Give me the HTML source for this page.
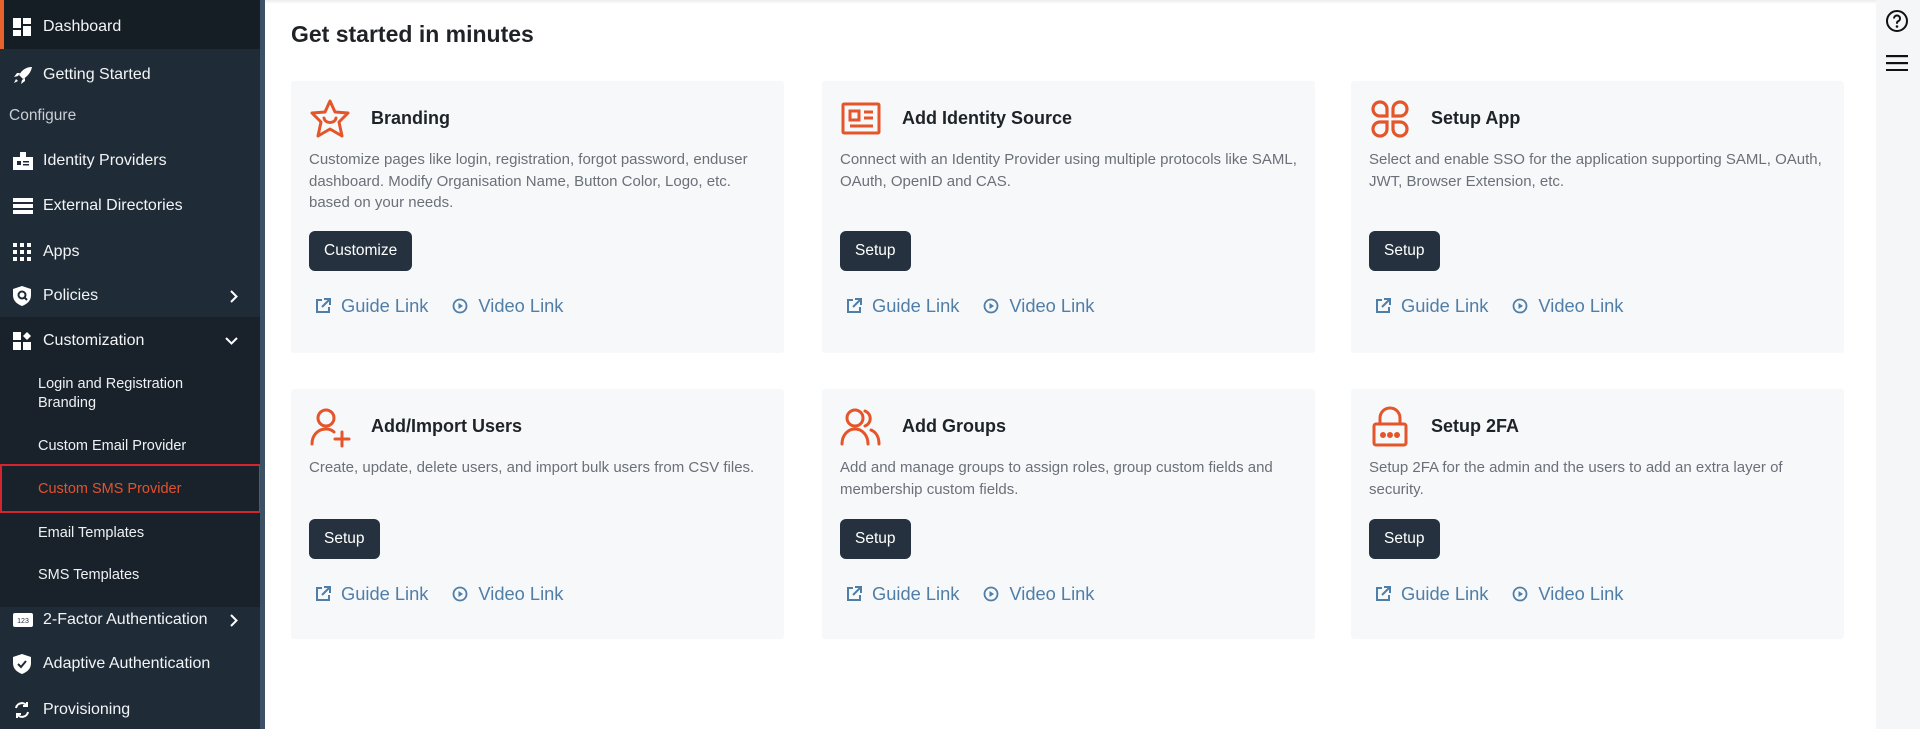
<!DOCTYPE html>
<html><head><meta charset="utf-8"><style>
*{box-sizing:border-box;margin:0;padding:0}
body{width:1920px;height:729px;overflow:hidden;background:#fff;font-family:"Liberation Sans",sans-serif;position:relative}
#sb{position:absolute;left:0;top:0;width:260px;height:729px;background:#1f2b36;color:#fff}
#sbb{position:absolute;left:260px;top:0;width:5px;height:729px;background:#3d5166}
.it{position:absolute;left:0;width:260px;height:44px;display:flex;align-items:center;font-size:16px;color:#f2f4f6}
.it svg{position:absolute;left:13px}
.it span{position:absolute;left:43px}
.it svg.chev{left:auto;right:22px}
.sub{position:absolute;left:38px;font-size:14.5px;color:#eef1f3;line-height:19px}
#rp{position:absolute;left:1876px;top:0;width:44px;height:729px;background:#f5f6f7}
h1{position:absolute;left:291px;top:21px;font-size:23px;font-weight:bold;color:#1f2328}
.card{position:absolute;width:493px;background:#f7f8fa;border-radius:3px}
.card .ic{position:absolute;left:18px;top:17px}
.card h2{position:absolute;left:80px;top:27px;font-size:18px;font-weight:bold;color:#1e2328}
.card p{position:absolute;left:18px;top:68px;width:462px;font-size:15px;line-height:21.5px;color:#6b7078}
.btn{position:absolute;left:18px;height:40px;padding:0 15px;background:#25313e;color:#fff;border-radius:6px;font-size:15.5px;line-height:40px}
.lk{position:absolute;left:24px;font-size:18.3px;color:#4f7ea8;display:flex;align-items:center}
.lk svg{margin-right:10px}
</style></head><body>
<div id="sb">
 <div style="position:absolute;top:0;left:0;width:260px;height:49px;background:#151d25;border-left:4px solid #e8622c"></div>
 <div class="it" style="top:5px">
  <svg width="18" height="18" viewBox="0 0 18 18" style="left:13px" fill="#fff"><rect x="0" y="0" width="8" height="10"/><rect x="10" y="0" width="8" height="6"/><rect x="0" y="12" width="8" height="6"/><rect x="10" y="8" width="8" height="10"/></svg><span>Dashboard</span></div>
 <div class="it" style="top:53px"><svg width="20" height="18" viewBox="0 0 20 18" fill="#fff"><path d="M19 1C13 1 9 4 6 9l4 4c5-3 8-7 9-12zM5 10l-4 1 3-4 3 0zM9 14l-1 4 4-3 0-3zM3 13l-2 4 4-2z"/></svg><span>Getting Started</span></div>
 <div style="position:absolute;left:9px;top:107px;font-size:15.5px;color:#c9cfd5">Configure</div>
 <div class="it" style="top:139px"><svg width="20" height="18" viewBox="0 0 20 18" fill="#fff"><path d="M7 0h6v5h7v13H0V5h7z"/><rect x="4" y="9" width="4" height="4" fill="#1f2b36"/><rect x="10" y="9" width="6" height="1.5" fill="#1f2b36"/><rect x="10" y="12" width="6" height="1.5" fill="#1f2b36"/></svg><span>Identity Providers</span></div>
 <div class="it" style="top:184px"><svg width="20" height="16" viewBox="0 0 20 16" fill="#fff"><rect y="0" width="20" height="4"/><rect y="6" width="20" height="4"/><rect y="12" width="20" height="4"/></svg><span>External Directories</span></div>
 <div class="it" style="top:230px"><svg width="18" height="18" viewBox="0 0 18 18" fill="#fff"><rect x="0" y="0" width="4" height="4"/><rect x="7" y="0" width="4" height="4"/><rect x="14" y="0" width="4" height="4"/><rect x="0" y="7" width="4" height="4"/><rect x="7" y="7" width="4" height="4"/><rect x="14" y="7" width="4" height="4"/><rect x="0" y="14" width="4" height="4"/><rect x="7" y="14" width="4" height="4"/><rect x="14" y="14" width="4" height="4"/></svg><span>Apps</span></div>
 <div class="it" style="top:274px"><svg width="18" height="20" viewBox="0 0 18 20"><path d="M9 0l9 3v6c0 6-4 9-9 11C4 18 0 15 0 9V3z" fill="#fff"/><circle cx="9" cy="9" r="3.5" fill="none" stroke="#1f2b36" stroke-width="2"/><path d="M11 11l3 3" stroke="#1f2b36" stroke-width="2"/></svg><span>Policies</span><svg class="chev" width="8" height="13" viewBox="0 0 8 13" fill="none" stroke="#fff" stroke-width="2"><path d="M1 1l5.5 5.5L1 12"/></svg></div>
 <div style="position:absolute;top:317px;left:0;width:260px;height:290px;background:#19222b"></div>
 <div class="it" style="top:319px"><svg width="18" height="18" viewBox="0 0 18 18" fill="#fff"><rect x="0" y="0" width="8" height="8"/><rect x="0" y="10" width="8" height="8"/><rect x="10" y="10" width="8" height="8"/><path d="M14 0l4 4-4 4-4-4z"/></svg><span>Customization</span><svg class="chev" width="13" height="8" viewBox="0 0 13 8" fill="none" stroke="#fff" stroke-width="2"><path d="M1 1l5.5 5.5L12 1"/></svg></div>
 <div class="sub" style="top:375px">Login and Registration<br>Branding</div>
 <div class="sub" style="top:437px">Custom Email Provider</div>
 <div style="position:absolute;left:0;top:464px;width:261px;height:49px;border:2px solid #d32530"></div>
 <div class="sub" style="top:480px;color:#e2522f">Custom SMS Provider</div>
 <div class="sub" style="top:524px">Email Templates</div>
 <div class="sub" style="top:566px">SMS Templates</div>
 <div class="it" style="top:598px"><svg width="20" height="14" viewBox="0 0 20 14"><rect width="20" height="14" rx="2" fill="#fff"/><text x="10" y="10" font-size="7" text-anchor="middle" fill="#1f2b36" font-family="Liberation Sans">123</text></svg><span>2-Factor Authentication</span><svg class="chev" width="8" height="13" viewBox="0 0 8 13" fill="none" stroke="#fff" stroke-width="2"><path d="M1 1l5.5 5.5L1 12"/></svg></div>
 <div class="it" style="top:642px"><svg width="18" height="20" viewBox="0 0 18 20"><path d="M9 0l9 3v6c0 6-4 9-9 11C4 18 0 15 0 9V3z" fill="#fff"/><path d="M5 10l3 3 5-6" stroke="#1f2b36" stroke-width="2" fill="none"/></svg><span>Adaptive Authentication</span></div>
 <div class="it" style="top:688px"><svg width="18" height="18" viewBox="0 0 18 18" fill="none" stroke="#fff" stroke-width="2"><path d="M3 7a6 6 0 0 1 11-2M15 11a6 6 0 0 1-11 2"/><path d="M14 1v4h-4M4 17v-4h4"/></svg><span>Provisioning</span></div>
</div>
<div id="sbb"></div>
<div style="position:absolute;left:265px;top:0;width:1611px;height:4px;background:linear-gradient(#ececec,#fff)"></div>
<div id="rp">
 <svg width="24" height="24" viewBox="0 0 24 24" style="position:absolute;left:9px;top:9px"><circle cx="12" cy="12" r="10" fill="none" stroke="#111" stroke-width="2"/><path d="M9 9.5a3 3 0 1 1 4 2.8c-.8.4-1 1-1 2v.5" fill="none" stroke="#111" stroke-width="2"/><circle cx="12" cy="17.5" r="1.3" fill="#111"/></svg>
 <svg width="22" height="16" viewBox="0 0 22 16" style="position:absolute;left:10px;top:55px" fill="#111"><rect y="0" width="22" height="2.2"/><rect y="7" width="22" height="2.2"/><rect y="14" width="22" height="2.2"/></svg>
</div>
<h1>Get started in minutes</h1>

<div class="card" style="left:291px;top:81px;height:272px">
 <svg class="ic" width="42" height="42" viewBox="0 0 42 42" fill="none" stroke="#e4552a" stroke-width="3" stroke-linejoin="round"><path d="M21 3l5 11 13 1-9 9 3 14-12-7-12 7 3-14-9-9 13-1z"/><path d="M15 20c1 6 11 6 12 0" stroke-linecap="round"/></svg>
 <h2>Branding</h2>
 <p>Customize pages like login, registration, forgot password, enduser dashboard. Modify Organisation Name, Button Color, Logo, etc. based on your needs.</p>
 <div class="btn" style="top:150px">Customize</div>
 <div class="lk" style="top:214px"><svg width="16" height="16" viewBox="0 0 16 16" fill="none" stroke="#4f7ea8" stroke-width="2"><path d="M7 2H2v12h12V9M9 1h6v6M15 1L7 9"/></svg>Guide Link<span style="display:inline-block;width:24px"></span><svg width="16" height="16" viewBox="0 0 16 16"><circle cx="8" cy="8" r="6.5" fill="none" stroke="#4f7ea8" stroke-width="1.8"/><path d="M6.5 5v6l4.5-3z" fill="#4f7ea8"/></svg>Video Link</div>
</div>

<div class="card" style="left:822px;top:81px;height:272px">
 <svg class="ic" width="42" height="42" viewBox="0 0 42 42" fill="none" stroke="#e4552a" stroke-width="3"><rect x="3" y="6" width="36" height="29" rx="1"/><rect x="10" y="13" width="9" height="9"/><path d="M24 14h9M24 20h9M10 28h23"/></svg>
 <h2>Add Identity Source</h2>
 <p>Connect with an Identity Provider using multiple protocols like SAML, OAuth, OpenID and CAS.</p>
 <div class="btn" style="top:150px">Setup</div>
 <div class="lk" style="top:214px"><svg width="16" height="16" viewBox="0 0 16 16" fill="none" stroke="#4f7ea8" stroke-width="2"><path d="M7 2H2v12h12V9M9 1h6v6M15 1L7 9"/></svg>Guide Link<span style="display:inline-block;width:24px"></span><svg width="16" height="16" viewBox="0 0 16 16"><circle cx="8" cy="8" r="6.5" fill="none" stroke="#4f7ea8" stroke-width="1.8"/><path d="M6.5 5v6l4.5-3z" fill="#4f7ea8"/></svg>Video Link</div>
</div>

<div class="card" style="left:1351px;top:81px;height:272px">
 <svg class="ic" width="42" height="42" viewBox="0 0 42 42" fill="none" stroke="#e4552a" stroke-width="3.2"><path d="M18 18H11a7 7 0 1 1 7-7zM24 18h7a7 7 0 1 0-7-7zM18 24H11a7 7 0 1 0 7 7zM24 24h7a7 7 0 1 1-7 7z"/></svg>
 <h2>Setup App</h2>
 <p>Select and enable SSO for the application supporting SAML, OAuth, JWT, Browser Extension, etc.</p>
 <div class="btn" style="top:150px">Setup</div>
 <div class="lk" style="top:214px"><svg width="16" height="16" viewBox="0 0 16 16" fill="none" stroke="#4f7ea8" stroke-width="2"><path d="M7 2H2v12h12V9M9 1h6v6M15 1L7 9"/></svg>Guide Link<span style="display:inline-block;width:24px"></span><svg width="16" height="16" viewBox="0 0 16 16"><circle cx="8" cy="8" r="6.5" fill="none" stroke="#4f7ea8" stroke-width="1.8"/><path d="M6.5 5v6l4.5-3z" fill="#4f7ea8"/></svg>Video Link</div>
</div>

<div class="card" style="left:291px;top:389px;height:250px">
 <svg class="ic" width="42" height="42" viewBox="0 0 42 42" fill="none" stroke="#e4552a" stroke-width="3" stroke-linecap="round"><circle cx="17" cy="12" r="8"/><path d="M3 38c0-9 6-15 14-15 3 0 6 1 8 3M33 26v14M26 33h14"/></svg>
 <h2>Add/Import Users</h2>
 <p>Create, update, delete users, and import bulk users from CSV files.</p>
 <div class="btn" style="top:130px">Setup</div>
 <div class="lk" style="top:194px"><svg width="16" height="16" viewBox="0 0 16 16" fill="none" stroke="#4f7ea8" stroke-width="2"><path d="M7 2H2v12h12V9M9 1h6v6M15 1L7 9"/></svg>Guide Link<span style="display:inline-block;width:24px"></span><svg width="16" height="16" viewBox="0 0 16 16"><circle cx="8" cy="8" r="6.5" fill="none" stroke="#4f7ea8" stroke-width="1.8"/><path d="M6.5 5v6l4.5-3z" fill="#4f7ea8"/></svg>Video Link</div>
</div>

<div class="card" style="left:822px;top:389px;height:250px">
 <svg class="ic" width="42" height="42" viewBox="0 0 42 42" fill="none" stroke="#e4552a" stroke-width="3" stroke-linecap="round"><circle cx="15" cy="12" r="8"/><path d="M2 38c0-9 6-15 13-15s13 6 13 15M25 5a8 8 0 0 1 0 15M31 24c5 2 8 7 8 14"/></svg>
 <h2>Add Groups</h2>
 <p>Add and manage groups to assign roles, group custom fields and membership custom fields.</p>
 <div class="btn" style="top:130px">Setup</div>
 <div class="lk" style="top:194px"><svg width="16" height="16" viewBox="0 0 16 16" fill="none" stroke="#4f7ea8" stroke-width="2"><path d="M7 2H2v12h12V9M9 1h6v6M15 1L7 9"/></svg>Guide Link<span style="display:inline-block;width:24px"></span><svg width="16" height="16" viewBox="0 0 16 16"><circle cx="8" cy="8" r="6.5" fill="none" stroke="#4f7ea8" stroke-width="1.8"/><path d="M6.5 5v6l4.5-3z" fill="#4f7ea8"/></svg>Video Link</div>
</div>

<div class="card" style="left:1351px;top:389px;height:250px">
 <svg class="ic" width="42" height="42" viewBox="0 0 42 42" fill="none" stroke="#e4552a" stroke-width="3"><path d="M11 18v-6a10 10 0 0 1 20 0v6"/><rect x="5" y="18" width="32" height="21" rx="2"/><circle cx="14" cy="29" r="1.5" fill="#e4552a"/><circle cx="21" cy="29" r="1.5" fill="#e4552a"/><circle cx="28" cy="29" r="1.5" fill="#e4552a"/></svg>
 <h2>Setup 2FA</h2>
 <p>Setup 2FA for the admin and the users to add an extra layer of security.</p>
 <div class="btn" style="top:130px">Setup</div>
 <div class="lk" style="top:194px"><svg width="16" height="16" viewBox="0 0 16 16" fill="none" stroke="#4f7ea8" stroke-width="2"><path d="M7 2H2v12h12V9M9 1h6v6M15 1L7 9"/></svg>Guide Link<span style="display:inline-block;width:24px"></span><svg width="16" height="16" viewBox="0 0 16 16"><circle cx="8" cy="8" r="6.5" fill="none" stroke="#4f7ea8" stroke-width="1.8"/><path d="M6.5 5v6l4.5-3z" fill="#4f7ea8"/></svg>Video Link</div>
</div>
</body></html>
